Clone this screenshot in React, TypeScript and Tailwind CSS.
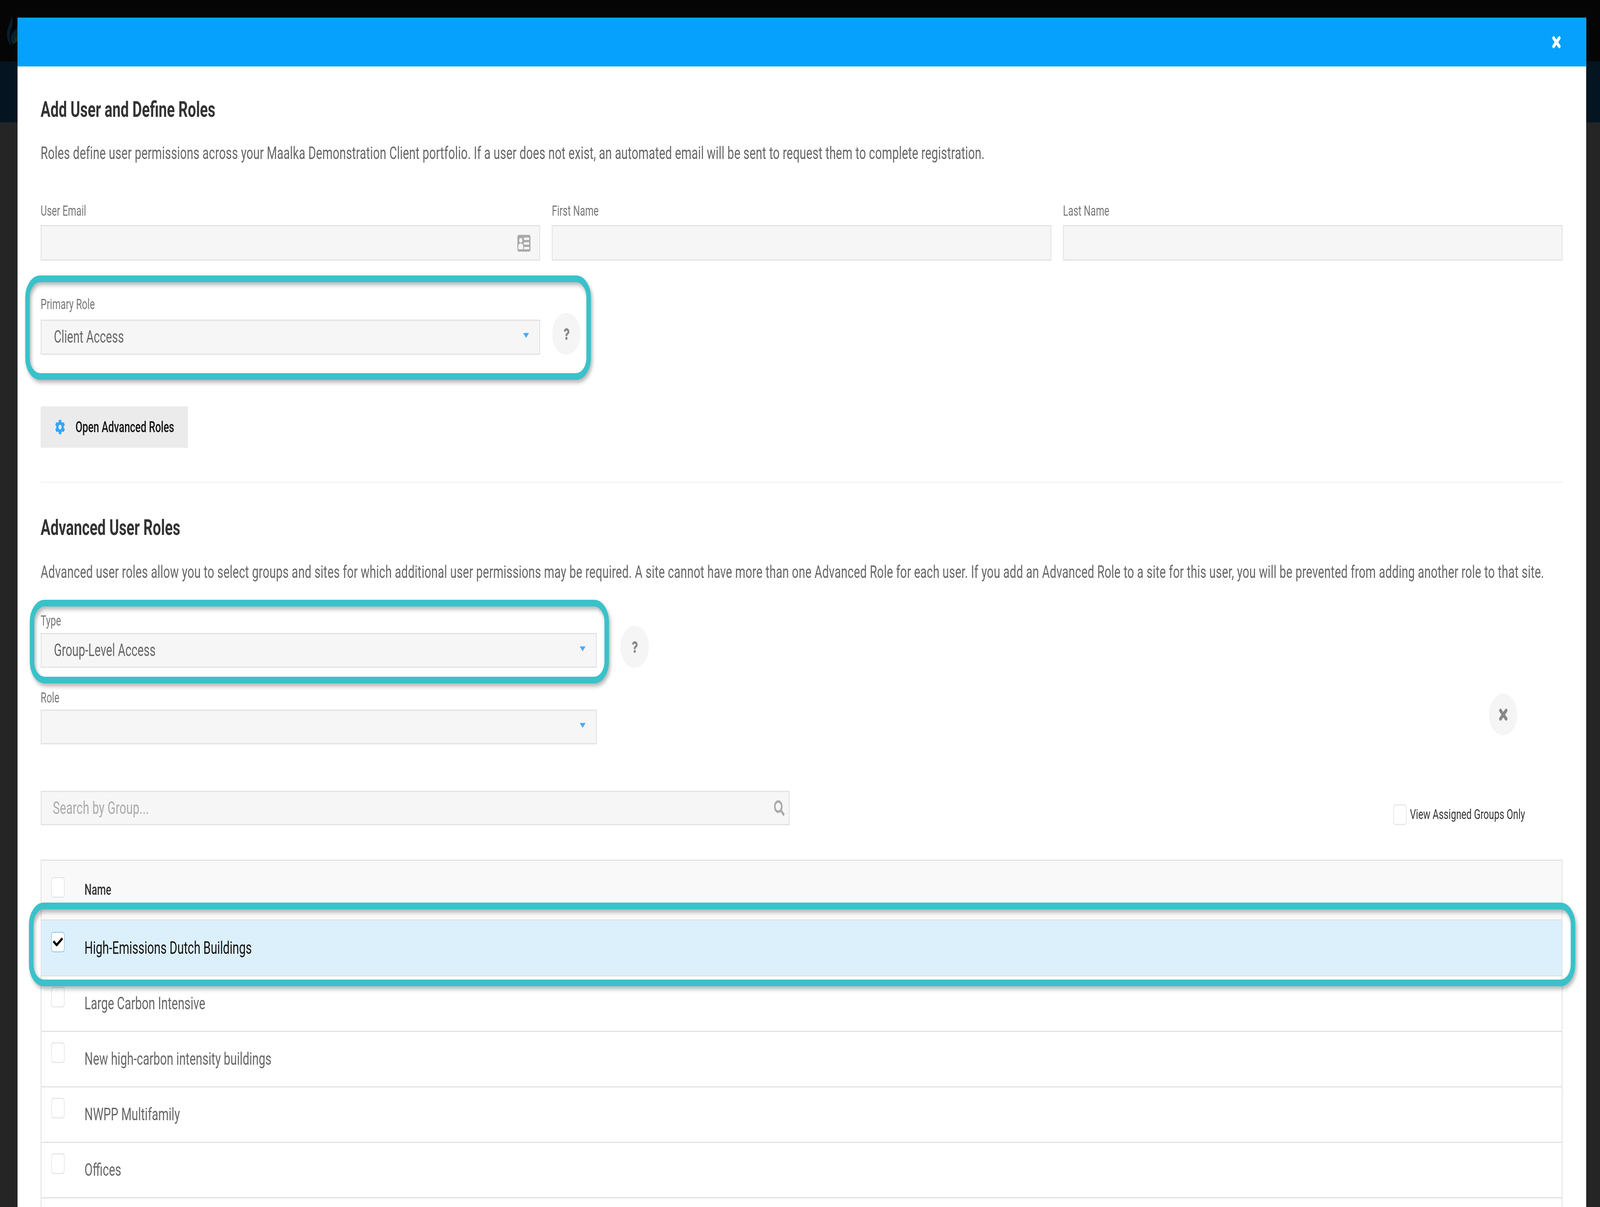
import type { ReactNode } from 'react';
import { FaCheck, FaCog, FaQuestion, FaSearch } from 'react-icons/fa';

const groups = ['Large Carbon Intensive', 'New high-carbon intensity buildings', 'NWPP Multifamily', 'Offices', ''];

function Arrow() {
  return (
    <svg viewBox="0 0 21 12" className="absolute right-[39px] top-[31px] h-[13px] w-[22px]">
      <polygon points="0,0 21,0 10.5,12" fill="#4aa9fb" />
    </svg>
  );
}

function CloseIcon({ className }: { className: string }) {
  return (
    <svg viewBox="0 0 30 30" className={className}>
      <path d="M5 5L25 25M25 5L5 25" stroke="currentColor" strokeWidth="9" strokeLinecap="round" />
    </svg>
  );
}

function Label({ children }: { children: string }) {
  return <div className="h-[40px] text-[36px] leading-[40px] text-[#777]">{children}</div>;
}

function Field({ label, children }: { label: string; children?: ReactNode }) {
  return (
    <div className="min-w-0">
      <Label>{label}</Label>
      <div className="relative mt-[16px] h-[91px] border-[3px] border-[#e2e2e2] bg-[#f6f6f6]">{children}</div>
    </div>
  );
}

function Select({ value, className }: { value?: string; className: string }) {
  return (
    <div className={`relative h-[89px] border-[3px] border-[#e2e2e2] bg-[#f6f6f6] pl-[47px] text-[43.5px] leading-[83px] text-[#666] ${className}`}>
      {value}
      <Arrow />
    </div>
  );
}

function RoundButton({ children, className }: { children: ReactNode; className: string }) {
  return (
    <div className={`flex h-[107px] w-[107px] shrink-0 items-center justify-center rounded-full bg-[#f5f5f5] text-[#888] ${className}`}>
      {children}
    </div>
  );
}

function Checkbox({ className, checked }: { className?: string; checked?: boolean }) {
  return (
    <div
      className={`flex h-[52px] w-[50px] shrink-0 items-center justify-center rounded-[8px] border-[2px] bg-white ${
        checked ? 'border-[#8cc4e4]' : 'border-[#dedede]'
      } ${className ?? ''}`}
    >
      {checked && <FaCheck preserveAspectRatio="none" className="h-[30px] w-[38px] text-black" />}
    </div>
  );
}

function Callout({ className }: { className: string }) {
  return (
    <div
      className={`absolute z-10 rounded-[56px] border-[17px] border-[#39c2c9] drop-shadow-[5px_7px_6px_rgba(0,0,0,0.3)] ${className}`}
    />
  );
}

export default function App() {
  // the browser caps the window below the reference's 6022px, so the page is squeezed to whatever width it really got
  const squeeze = window.innerWidth / 6022;

  return (
    <div className="h-screen w-screen overflow-hidden">
      <div
        className="relative h-[3089px] w-[6022px] origin-top-left overflow-hidden bg-[#252525] font-['Roboto',sans-serif]"
        style={{ transform: `scaleX(${squeeze})` }}
      >
        {/* page behind the modal */}
        <div className="h-[157px] bg-[#050505] pl-[26px] pt-[40px]">
          <svg viewBox="0 0 40 78" className="h-[78px] w-[40px]">
            <path d="M17 0C24 14 22 24 14 36C8 46 10 62 18 78C6 70 0 58 0 48C0 30 16 20 17 0Z" fill="#06202f" />
            <path d="M40 25C36 36 24 40 17 50C13 58 16 68 22 74C32 70 36 60 40 52Z" fill="#06202f" />
            <path d="M40 50C32 52 26 60 25 70C30 72 36 68 40 64Z" fill="#1a2a10" />
          </svg>
        </div>
        <div className="h-[156px] bg-[#041521]" />

        {/* modal */}
        <div className="absolute left-[66px] top-[45px] h-[3100px] w-[5904px] bg-white">
          <div className="flex h-[125px] items-start justify-end bg-[#05a1fc] pr-[96px] pt-[47px]">
            <CloseIcon className="h-[32px] w-[32px] text-white" />
          </div>

          <div className="pl-[87px] pr-[89px]">
            <h2 className="mt-[80px] h-[60px] text-[55px] font-bold leading-[60px] text-[#333]">
              Add User and Define Roles
            </h2>
            <p className="mt-[52px] h-[60px] whitespace-nowrap text-[44px] leading-[60px] tracking-[0.3px] text-[#666]">
              Roles define user permissions across your Maalka Demonstration Client portfolio. If a user does not exist, an automated email will be sent to request them to complete registration.
            </p>

            <div className="mt-[98px] grid grid-cols-3 gap-x-[44px]">
              <Field label="User Email">
                <svg viewBox="0 0 50 43" className="absolute right-[33px] top-[22px] h-[43px] w-[50px]">
                  <rect width="50" height="43" rx="6" fill="#aaa" />
                  <circle cx="13" cy="14" r="6" fill="#f6f6f6" />
                  <path d="M4 37V29C4 24 8 22 13 22C18 22 22 24 22 29V37Z" fill="#f6f6f6" />
                  <rect x="25" y="7" width="20" height="6" fill="#f6f6f6" />
                  <rect x="25" y="19" width="20" height="6" fill="#f6f6f6" />
                  <rect x="25" y="31" width="20" height="6" fill="#f6f6f6" />
                </svg>
              </Field>
              <Field label="First Name" />
              <Field label="Last Name" />
            </div>

            <div className="relative mt-[92px] flex items-end">
              <Callout className="left-[-58px] top-[-54px] h-[267px] w-[2129px]" />
              <div className="w-[1880px]">
                <Label>Primary Role</Label>
                <Select value="Client Access" className="mt-[19px] !h-[90px]" />
              </div>
              <RoundButton className="ml-[45px]">
                <FaQuestion className="h-[30px] w-[24px]" />
              </RoundButton>
            </div>

            <button
              type="button"
              className="mt-[132px] flex h-[106px] w-[554px] items-center bg-[#ebebeb] pl-[54px] text-[38px] font-medium text-[#111]"
            >
              <FaCog className="h-[38px] w-[38px] text-[#33a6fb]" />
              <span className="ml-[39px]">Open Advanced Roles</span>
            </button>

            <div className="mt-[87px] h-[2px] bg-[#eeeeee]" />

            <h2 className="mt-[85px] h-[60px] text-[55px] font-bold leading-[60px] text-[#333]">
              Advanced User Roles
            </h2>
            <p className="mt-[54px] h-[60px] whitespace-nowrap text-[44px] leading-[60px] tracking-[0.35px] text-[#666]">
              Advanced user roles allow you to select groups and sites for which additional user permissions may be required. A site cannot have more than one Advanced Role for each user. If you add an Advanced Role to a site for this user, you will be prevented from adding another role to that site.
            </p>

            <div className="relative mt-[75px] flex items-end">
              <Callout className="left-[-41px] top-[-34px] h-[214px] w-[2180px]" />
              <div className="w-[2093px]">
                <Label>Type</Label>
                <Select value="Group-Level Access" className="mt-[11px]" />
              </div>
              <RoundButton className="ml-[89px]">
                <FaQuestion className="h-[30px] w-[24px]" />
              </RoundButton>
            </div>

            <div className="mt-[57px] flex items-start">
              <div className="w-[2093px]">
                <Label>Role</Label>
                <Select className="mt-[10px]" />
              </div>
              <RoundButton className="ml-auto mr-[170px] mt-[9px]">
                <CloseIcon className="h-[32px] w-[32px]" />
              </RoundButton>
            </div>

            <div className="mt-[119px] flex items-start">
              <div className="flex h-[88px] w-[2819px] items-center justify-between border-[3px] border-[#e2e2e2] bg-[#f6f6f6] pl-[43px] pr-[16px] text-[44px] tracking-[0.35px] text-[#aaa]">
                <span>Search by Group...</span>
                <FaSearch className="h-[40px] w-[40px] text-[#aaa]" />
              </div>
              <label className="ml-auto mr-[141px] mt-[34px] flex items-center gap-[13px] text-[35.5px] text-[#333]">
                <Checkbox />
                View Assigned Groups Only
              </label>
            </div>

            <div className="mt-[88px] border-x-[3px] border-t-[3px] border-[#e2e2e2]">
              <div className="flex h-[153px] border-b-[3px] border-[#e2e2e2] bg-[#f9f9f9] pl-[37px]">
                <Checkbox className="mt-[42px]" />
                <span className="ml-[75px] mt-[54px] text-[38px] font-medium leading-[40px] text-[#333]">Name</span>
              </div>
              <div className="relative flex h-[143px] items-center border-b-[3px] border-[#e2e2e2] bg-[#dcf0fc] pl-[37px] text-[44.5px] text-[#111]">
                <Callout className="left-[-47px] top-[-46px] h-[214px] w-[5820px]" />
                <Checkbox className="mb-[30px]" checked />
                <span className="ml-[75px]">High-Emissions Dutch Buildings</span>
              </div>
              {groups.map((g) => (
                <div key={g} className="flex h-[142px] items-center border-b-[3px] border-[#e2e2e2] pl-[37px] text-[44.5px] text-[#666]">
                  {g && <Checkbox className="mb-[34px]" />}
                  {g && <span className="ml-[75px]">{g}</span>}
                </div>
              ))}
            </div>
          </div>
        </div>
      </div>
    </div>
  );
}
